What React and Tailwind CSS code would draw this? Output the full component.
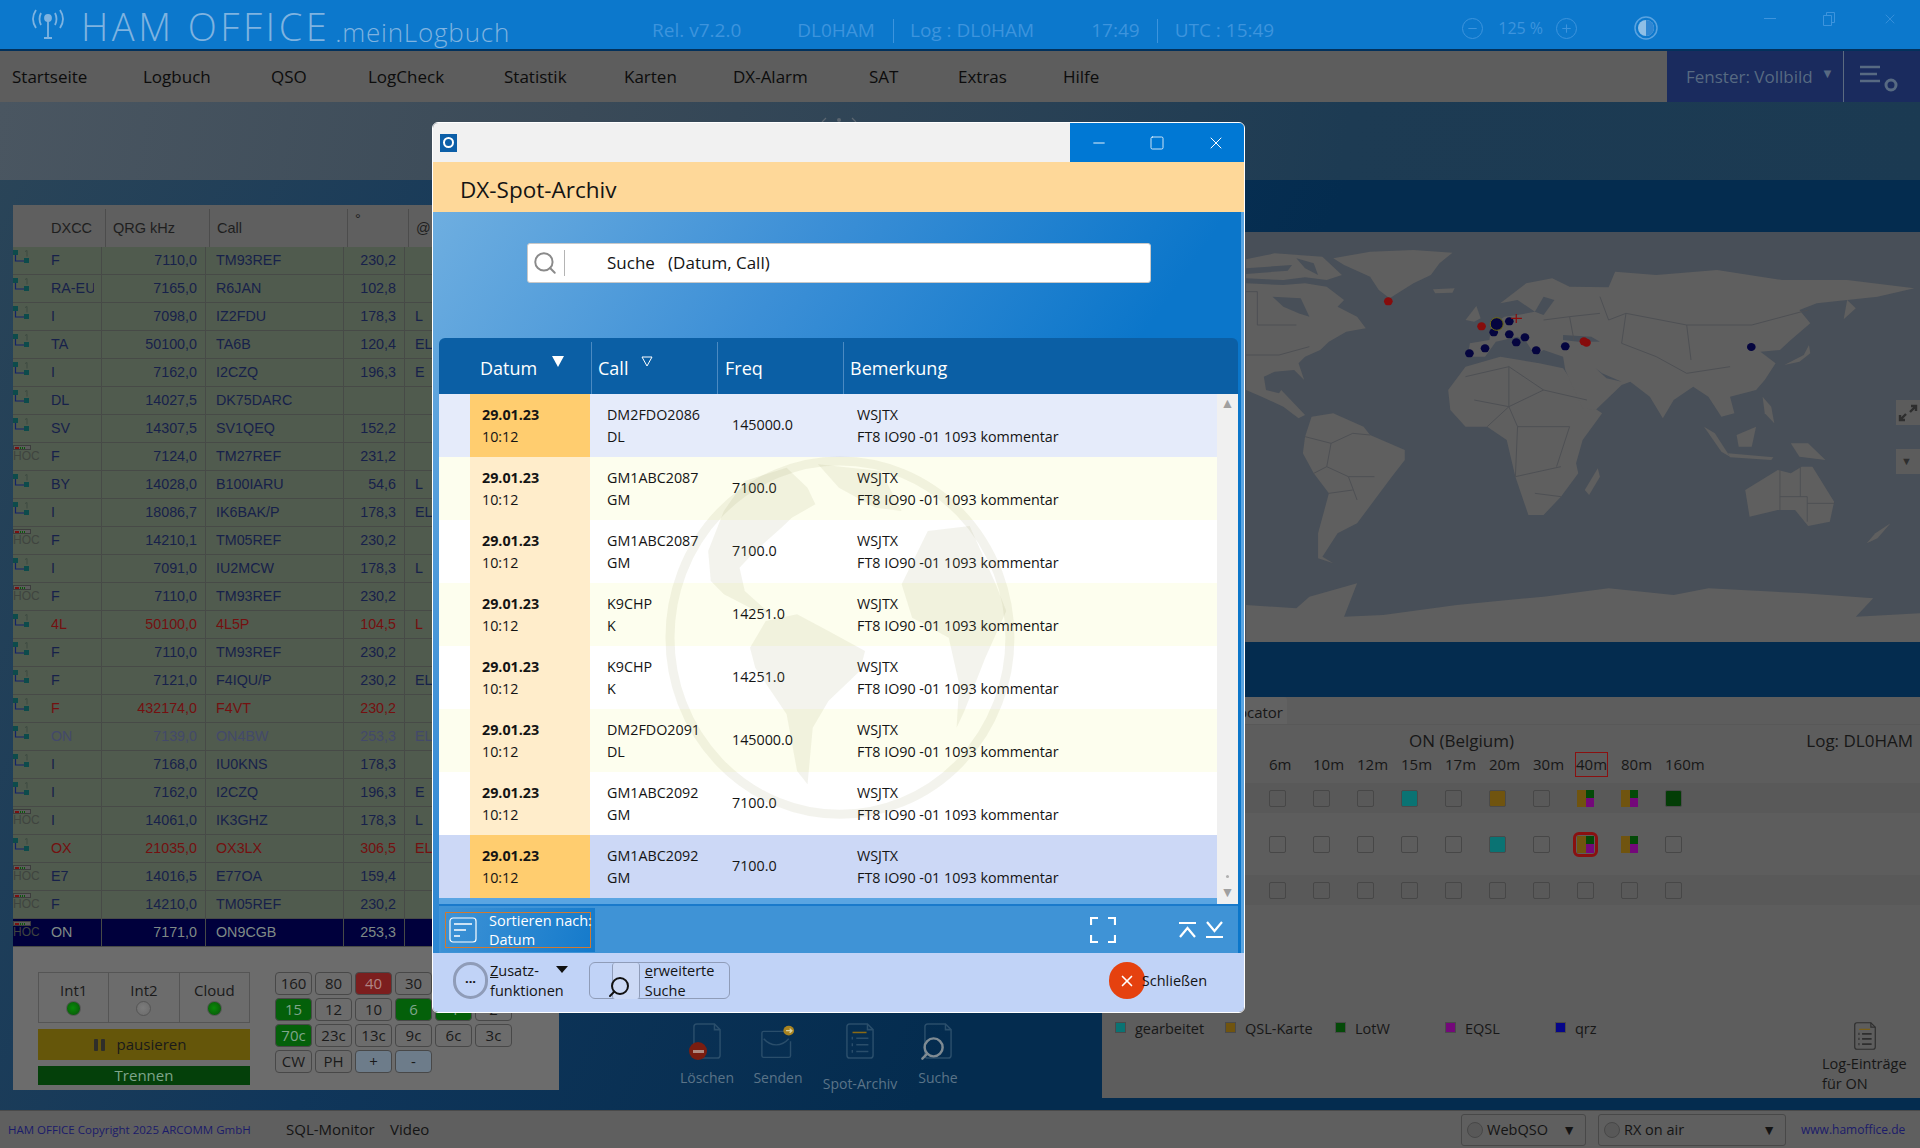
import React from 'react';
import { Search, Minus, Square, X, Plus } from 'lucide-react';

const menuItems = [
  { name: 'Startseite', w: 131 },
  { name: 'Logbuch', w: 128 },
  { name: 'QSO', w: 97 },
  { name: 'LogCheck', w: 136 },
  { name: 'Statistik', w: 120 },
  { name: 'Karten', w: 109 },
  { name: 'DX-Alarm', w: 136 },
  { name: 'SAT', w: 89 },
  { name: 'Extras', w: 105 },
  { name: 'Hilfe', w: 100 },
];

const spots = [
  ['t', 'F', '7110,0', 'TM93REF', '230,2', ''],
  ['t', 'RA-EU', '7165,0', 'R6JAN', '102,8', ''],
  ['t', 'I', '7098,0', 'IZ2FDU', '178,3', 'L'],
  ['t', 'TA', '50100,0', 'TA6B', '120,4', 'EL'],
  ['t', 'I', '7162,0', 'I2CZQ', '196,3', 'E'],
  ['t', 'DL', '14027,5', 'DK75DARC', '', ''],
  ['t', 'SV', '14307,5', 'SV1QEQ', '152,2', ''],
  ['h', 'F', '7124,0', 'TM27REF', '231,2', ''],
  ['t', 'BY', '14028,0', 'B100IARU', '54,6', 'L'],
  ['t', 'I', '18086,7', 'IK6BAK/P', '178,3', 'EL'],
  ['h', 'F', '14210,1', 'TM05REF', '230,2', ''],
  ['t', 'I', '7091,0', 'IU2MCW', '178,3', 'L'],
  ['h', 'F', '7110,0', 'TM93REF', '230,2', ''],
  ['t', '4L', '50100,0', '4L5P', '104,5', 'L', 'red'],
  ['t', 'F', '7110,0', 'TM93REF', '230,2', ''],
  ['t', 'F', '7121,0', 'F4IQU/P', '230,2', 'EL'],
  ['t', 'F', '432174,0', 'F4VT', '230,2', '', 'red'],
  ['t', 'ON', '7139,0', 'ON4BW', '253,3', 'EL', 'dim'],
  ['t', 'I', '7168,0', 'IU0KNS', '178,3', ''],
  ['t', 'I', '7162,0', 'I2CZQ', '196,3', 'E'],
  ['h', 'I', '14061,0', 'IK3GHZ', '178,3', 'L'],
  ['t', 'OX', '21035,0', 'OX3LX', '306,5', 'EL', 'red'],
  ['h', 'E7', '14016,5', 'E77OA', '159,4', ''],
  ['h', 'F', '14210,0', 'TM05REF', '230,2', ''],
  ['h', 'ON', '7171,0', 'ON9CGB', '253,3', '', 'sel'],
];

const rowText = {
  red: 'text-[#741010]',
  dim: 'text-[#43496a]',
  sel: 'text-[#7f8a86]',
};

const bandRows = [
  [['160'], ['80'], ['40', 'r'], ['30'], ['20'], ['17']],
  [['15', 'g'], ['12'], ['10'], ['6', 'g'], ['4', 'g'], ['2']],
  [['70c', 'g'], ['23c'], ['13c'], ['9c'], ['6c'], ['3c']],
  [['CW'], ['PH'], ['+', 'b'], ['-', 'b']],
];

const archive = [
  ['DM2FDO2086', 'DL', '145000.0', 'first'],
  ['GM1ABC2087', 'GM', '7100.0'],
  ['GM1ABC2087', 'GM', '7100.0'],
  ['K9CHP', 'K', '14251.0'],
  ['K9CHP', 'K', '14251.0'],
  ['DM2FDO2091', 'DL', '145000.0'],
  ['GM1ABC2092', 'GM', '7100.0'],
  ['GM1ABC2092', 'GM', '7100.0', 'sel'],
];

const bands = ['6m', '10m', '12m', '15m', '17m', '20m', '30m', '40m', '80m', '160m'];
const grid = [
  ['', '', '', 'c', '', 'q', '', 'm', 'm', 'l'],
  ['', '', '', '', '', 'c', '', 'x', 'm', ''],
  ['', '', '', '', '', '', '', '', '', ''],
];
const legend = [
  ['gearbeitet', 'bg-[#0a7373]'],
  ['QSL-Karte', 'bg-[#70540f]'],
  ['LotW', 'bg-[#044a08]'],
  ['EQSL', 'bg-[#74087a]'],
  ['qrz', 'bg-[#05058a]'],
];

const TreeIcon = () => (
  <svg width="20" height="16" viewBox="0 0 20 16" className="block">
    <rect x="0" y="0" width="5" height="5" fill="#0d4b4b" />
    <rect x="11" y="8" width="5" height="5" fill="#0d4b4b" />
    <path d="M2.500 5v6H11" stroke="#12236a" strokeWidth="1.2" fill="none" />
    <path d="M12 1.500l2-1v6" stroke="#3c4a40" strokeWidth="1" fill="none" />
  </svg>
);

const HocIcon = () => (
  <div className="flex flex-col">
    <div className="flex h-[5px] w-[18px] items-center gap-[1px] border border-[#3d3d3d] bg-[#5c5c5c] pl-[1px]">
      <span className="h-[2px] w-[4px] bg-[#7a1010]" />
      <span className="h-[2px] w-[1px] bg-[#0a5a0a]" />
      <span className="h-[2px] w-[1px] bg-[#0a5a0a]" />
      <span className="h-[2px] w-[1px] bg-[#0a5a0a]" />
    </div>
    <span className="font-['Liberation_Sans',sans-serif] text-[12px] leading-[13px] text-[#3f443f]">HOC</span>
  </div>
);

const Led = ({ on }) => (
  <span
    className={`mt-[1px] h-[15px] w-[15px] rounded-full border border-[#555] ${
      on
        ? 'bg-[radial-gradient(circle_at_45%_45%,#088a08,#086a08_55%,#0a4a14)]'
        : 'bg-[radial-gradient(circle_at_45%_45%,#7c7c7c,#6a6a6a)]'
    }`}
  />
);

const DocIcon = ({ className = 'h-[36px] w-[28px]', children, stroke = '#2a4e6b' }) => (
  <svg viewBox="0 0 30 38" preserveAspectRatio="none" className={className} fill="none" stroke={stroke} strokeWidth="1.6">
    <path d="M4 1h19l6 6v27a3 3 0 0 1-3 3H4a3 3 0 0 1-3-3V4a3 3 0 0 1 3-3z" />
    <path d="M23 1v6h6" />
    {children}
  </svg>
);

// grobe Weltkarte, Koordinaten im Massstab der Vorlage
const land = [
  'M215 175L300 155L400 150L490 158L460 190L440 225L400 250L345 295L320 270L300 230L240 195Z',
  'M14 250L100 255L150 250L200 260L240 300L225 320L270 350L290 385L245 395L205 425L185 450L150 470L135 490L148 540L125 510L80 515L55 530L60 570L90 580L95 570L110 590L150 645L135 655L100 620L50 590L14 570Z',
  'M14 178L80 160L190 170L235 225L200 240L150 232L100 240L14 235Z',
  'M165 650L215 640L285 680L300 705L380 750L380 780L350 830L310 900L270 970L225 1000L190 1070L215 1090L180 1075L180 1000L205 880L170 820L145 760L150 710Z',
  'M480 570L520 500L600 470L690 490L745 505L800 610L835 640L790 720L775 790L780 820L740 890L700 945L665 945L635 830L615 720L570 680L520 680L485 630Z',
  'M825 805L830 830L805 885L795 870Z',
  'M525 470L530 430L575 420L580 375L610 350L640 345L680 335L640 300L600 310L660 250L720 235L760 260L850 262L865 215L960 225L1100 210L1250 240L1400 240L1555 265L1470 290L1400 300L1420 325L1392 358L1400 300L1330 310L1290 330L1315 370L1270 420L1245 450L1200 455L1235 490L1210 540L1190 570L1130 590L1140 640L1110 650L1080 590L1045 560L1000 600L975 655L945 590L900 545L880 555L820 630L790 625L750 510L745 470L700 450L680 465L660 425L640 410L590 425L565 470Z',
  'M520 360L545 318L555 355L540 365Z',
  'M445 268L495 265L490 278L450 280Z',
  'M1255 495L1300 465L1312 435L1315 460L1290 485Z',
  'M1070 680L1095 700L1130 770L1110 755Z',
  'M1145 705L1190 680L1180 740L1150 740Z',
  'M1125 760L1230 772L1225 780L1130 772Z',
  'M1270 730L1310 730L1350 780L1290 770Z',
  'M1205 590L1225 620L1232 670L1210 640Z',
  'M1165 870L1240 810L1270 820L1295 800L1320 800L1370 905L1360 965L1310 978L1280 930L1240 930L1175 950Z',
  'M1500 970L1470 1015L1445 1030L1465 1000Z',
  'M14 1215L130 1225L160 1190L270 1150L240 1250L330 1245L500 1215L700 1190L850 1165L1000 1185L1080 1165L1300 1180L1460 1195L1420 1250L1568 1240L1568 1326L14 1326Z',
];
const sea = [
  'M75 290L140 295L160 350L135 340L100 320Z',
  'M745 405L810 410L830 425L780 425L745 420Z',
  'M680 335L700 290L725 300L700 345Z',
  'M14 205L120 195L110 212L14 222Z',
  'M130 175L170 190L180 225L150 205Z',
  'M820 505L845 535L880 545L835 520Z',
];
const borders = [
  'M14 465L90 465L160 440M14 275L40 275L40 375L130 375',
  'M150 710L210 730L260 700L300 705M210 730L200 800L250 830L310 830M250 830L270 900M200 800L170 820M205 880L260 870',
  'M520 530L620 500L700 570L800 600M540 600L620 620L700 570M620 500L620 620M570 680L620 620L640 680L760 680M640 680L635 830L740 800M680 880L740 890M760 680L730 800',
  'M830 290L850 360L890 340L1030 375L1180 375L1310 330M890 340L880 430L960 470L1030 520L1130 500M1030 375L1040 480M760 350L830 340M700 360L760 350L770 420',
  'M1245 810L1245 930M1245 890L1308 890L1308 965M1292 800L1292 890M1308 910L1370 910',
];

const WorldMap = () => (
  <svg viewBox="0 96 1568 1230" preserveAspectRatio="none" className="h-full w-[680px]">
    {land.map((d, i) => <path key={i} d={d} fill="#5f5f5f" />)}
    {sea.map((d, i) => <path key={i} d={d} fill="#484f58" />)}
    {borders.map((d, i) => (
      <path key={i} d={d} fill="none" stroke="#4e5054" strokeWidth="1" vectorEffect="non-scaling-stroke" />
    ))}
    {[[342, 304], [557, 379], [799, 428], [793, 424]].map(([cx, cy]) => (
      <ellipse key={cx} cx={cx} cy={cy} rx="10" ry="12" fill="#860c0c" />
    ))}
    {[[585, 397], [621, 364], [621, 403], [657, 412], [637, 427], [565, 445], [529, 460], [683, 451], [750, 439], [1179, 441]].map(([cx, cy], i) => (
      <ellipse key={i} cx={cx} cy={cy} rx="10" ry="12" fill="#05053f" />
    ))}
    <ellipse cx="592" cy="372" rx="15" ry="19" fill="#05053f" stroke="#6e6a10" strokeWidth="1" vectorEffect="non-scaling-stroke" />
    <path d="M637 342v27M625 355h25" stroke="#8a0c0c" strokeWidth="1.2" vectorEffect="non-scaling-stroke" />
  </svg>
);

const Globe = () => (
  <svg viewBox="0 0 1568 1350" preserveAspectRatio="none" className="pointer-events-none absolute left-[-2px] top-[328px] h-[450px] w-[820px]">
    <ellipse cx="782" cy="560" rx="325" ry="530" fill="none" stroke="#8c8c50" strokeOpacity="0.1" strokeWidth="9" vectorEffect="non-scaling-stroke" />
    <g fill="#8c8c50" fillOpacity="0.1">
      <path d="M560 180L600 90L680 50L720 110L735 160L690 200L670 230L620 300L590 350L600 420L650 490L610 470L560 430L535 390L530 300Z" />
      <path d="M640 510L700 490L760 540L830 600L820 660L760 750L730 830L720 1000L700 960L680 790L620 650L610 590Z" />
      <path d="M900 400L950 240L1030 225L1080 400L1100 480L1060 620L1020 780L1005 830L1010 700L990 560L920 500Z" />
      <path d="M740 40L860 60L900 180L850 170L780 110Z" />
    </g>
  </svg>
);

const Cell = ({ kind }) => {
  if (kind === 'c') return <span className="h-[17px] w-[17px] rounded-[2px] border border-[#4a4a4a] bg-[#0a7373]" />;
  if (kind === 'q') return <span className="h-[17px] w-[17px] rounded-[2px] border border-[#4a4a4a] bg-[#70540f]" />;
  if (kind === 'l') return <span className="h-[17px] w-[17px] rounded-[2px] border border-[#4a4a4a] bg-[#033d06]" />;
  if (kind === 'm' || kind === 'x') {
    return (
      <span className={`flex h-[17px] w-[17px] rounded-[2px] ${kind === 'x' ? 'outline-[3px] outline-offset-[1px] outline-[#8a1010]' : ''}`}>
        <span className="w-1/2 bg-[#70540f]" />
        <span className="flex w-1/2 flex-col">
          <span className="h-1/2 bg-[#044a08]" />
          <span className="h-1/2 bg-[#74087a]" />
        </span>
      </span>
    );
  }
  return <span className="h-[17px] w-[17px] rounded-[2px] border border-[#474747]" />;
};

export default function App() {
  return (
    <div className="relative flex h-[1148px] w-[1920px] flex-col overflow-hidden bg-[#5d5d5d] font-['Open_Sans',sans-serif]">
      {/* Titelleiste */}
      <header className="flex h-[51px] shrink-0 items-center border-b-2 border-[#02315c] bg-[#0c78cc]">
        <svg width="34" height="32" viewBox="0 0 34 32" className="ml-[31px] mt-[-4px] shrink-0" fill="none" stroke="#7fb3e0" strokeWidth="1.8">
          <path d="M5 3c-4 6-4 12 0 18M29 3c4 6 4 12 0 18M10 6c-2 4-2 8 0 12M24 6c2 4 2 8 0 12" />
          <circle cx="17" cy="11" r="3" fill="#7fb3e0" />
          <path d="M17 13v17M13 31h8" />
        </svg>
        <span className="ml-[16px] mt-[3px] whitespace-nowrap text-[38px] font-light leading-none tracking-[3.5px] text-[#7fb3e0]">HAM OFFICE</span>
        <span className="ml-[5px] mt-[14px] whitespace-nowrap text-[26px] font-light leading-none tracking-[0.8px] text-[#7fb3e0]">.meinLogbuch</span>
        <span className="ml-[142px] mt-[12px] whitespace-nowrap text-[19px] text-[#3d94dd]">Rel. v7.2.0</span>
        <span className="ml-[56px] mt-[12px] text-[19px] text-[#3d94dd]">DL0HAM</span>
        <span className="ml-[18px] mt-[12px] h-[24px] w-px bg-[#3d94dd]" />
        <span className="ml-[16px] mt-[12px] whitespace-nowrap text-[19px] text-[#3d94dd]">Log : DL0HAM</span>
        <span className="ml-[57px] mt-[12px] text-[19px] text-[#3d94dd]">17:49</span>
        <span className="ml-[17px] mt-[12px] h-[24px] w-px bg-[#3d94dd]" />
        <span className="ml-[17px] mt-[12px] whitespace-nowrap text-[19px] text-[#3d94dd]">UTC : 15:49</span>
        <span className="ml-[188px] mt-[7px] flex h-[21px] w-[21px] shrink-0 items-center justify-center rounded-full border border-[#3d94dd]">
          <Minus size={13} color="#3d94dd" />
        </span>
        <span className="ml-[15px] mt-[7px] whitespace-nowrap text-[16px] text-[#3d94dd]">125 %</span>
        <span className="ml-[13px] mt-[7px] flex h-[21px] w-[21px] shrink-0 items-center justify-center rounded-full border border-[#3d94dd]">
          <Plus size={13} color="#3d94dd" />
        </span>
        <svg width="24" height="24" viewBox="0 0 24 24" className="ml-[57px] mt-[7px] shrink-0">
          <circle cx="12" cy="12" r="11" fill="none" stroke="#5aa3e0" strokeWidth="1.5" />
          <circle cx="12" cy="12" r="8" fill="#8fbfe6" />
          <path d="M12 4a8 8 0 0 1 0 16z" fill="#2f86d2" />
        </svg>
        <span className="ml-[106px] mt-[-12px] h-px w-[12px] shrink-0 bg-[#3d94dd]" />
        <svg width="14" height="14" viewBox="0 0 14 14" className="ml-[47px] mt-[-12px] shrink-0" fill="none" stroke="#3d94dd">
          <path d="M3.500 3.500V.5h8v10h-3M.5 3.500h8v10h-8z" />
        </svg>
        <X size={16} color="#3d94dd" className="ml-[45px] mt-[-12px] shrink-0" strokeWidth={1.2} />
      </header>

      {/* Hauptmenue */}
      <nav className="flex h-[51px] shrink-0 items-center bg-[#5d5d5d] pl-[12px] text-[17px] text-[#0c0c0c]">
        {menuItems.map((item) => (
          <span key={item.name} style={{ width: item.w }}>{item.name}</span>
        ))}
        <div className="ml-auto flex h-full w-[253px] items-center bg-[#1a2b5e] text-[#576a82]">
          <span className="ml-[19px] w-[126px] whitespace-nowrap">Fenster: Vollbild</span>
          <span className="ml-[9px] mt-[-6px] text-[13px]">▼</span>
          <span className="ml-[9px] h-full w-px bg-[#5c6b80]" />
          <svg width="42" height="34" viewBox="0 0 42 34" className="ml-[12px] mt-[6px]" fill="none" stroke="#576a82" strokeWidth="2.4">
            <path d="M4 4h20M4 11h17M4 18h20" />
            <circle cx="35" cy="22" r="5" strokeWidth="3" />
          </svg>
        </div>
      </nav>

      {/* Arbeitsflaeche */}
      <main className="flex min-h-0 flex-1 flex-col bg-[linear-gradient(115deg,#2b4558_0%,#10365a_32%,#042c4f_58%)]">
        <div className="flex h-[78px] shrink-0 bg-[linear-gradient(100deg,#4a5661_0%,#3a4a58_30%,#1d3b53_70%,#1b3a52_100%)] pl-[818px] pt-[15px]">
          <svg width="42" height="6" viewBox="0 0 42 6" fill="none" stroke="#5c6670" strokeWidth="1.200">
            <path d="M4 5L8 1M38 5L34 1" />
            <circle cx="21" cy="3" r="2" fill="#5c6670" stroke="none" />
          </svg>
        </div>
        <div className="flex min-h-0 flex-1">
          {/* Spot-Liste */}
          <section className="flex w-[559px] shrink-0 flex-col pl-[13px] pt-[25px]">
            <div className="flex h-[885px] flex-col rounded-t-[4px] bg-[#6c6c6c]">
              <div className="flex h-[42px] shrink-0 bg-[#5f5f5f] pt-[4px] font-['Liberation_Sans',sans-serif] text-[14.5px] text-[#1e1e1e]">
                <span className="w-[92px] pl-[38px] pt-[9px]">DXCC</span>
                <span className="w-[104px] border-l border-[#4c4c4c] pl-[7px] pt-[9px]">QRG kHz</span>
                <span className="w-[138px] border-l border-[#4c4c4c] pl-[7px] pt-[9px]">Call</span>
                <span className="w-[61px] border-l border-[#4c4c4c] pl-[7px]">°</span>
                <span className="flex-1 border-l border-[#4c4c4c] pl-[7px] pt-[9px]">@</span>
              </div>
              <div className="flex flex-col font-['Liberation_Sans',sans-serif] text-[14.3px]">
                {spots.map(([icon, dxcc, qrg, call, deg, at, state], i) => (
                  <div
                    key={i}
                    className={`flex h-[28px] border-b border-[#474a47] ${state === 'sel' ? 'bg-[#00003c]' : 'bg-[#505b4e]'} ${rowText[state] || 'text-[#17214a]'}`}
                  >
                    <div className="flex h-full w-[89px] shrink-0 border-r border-[#474a47]">
                      <div className={`w-[38px] shrink-0 ${icon === 't' ? 'pt-[3px]' : 'pt-[2px]'}`}>{icon === 't' ? <TreeIcon /> : <HocIcon />}</div>
                      <span className="w-[43px] overflow-hidden whitespace-nowrap leading-[27px]">{dxcc}</span>
                    </div>
                    <span className="w-[104px] shrink-0 border-r border-[#474a47] pr-[8px] text-right leading-[27px]">{qrg}</span>
                    <span className="w-[138px] shrink-0 border-r border-[#474a47] pl-[10px] leading-[27px]">{call}</span>
                    <span className="w-[61px] shrink-0 border-r border-[#474a47] pr-[8px] text-right leading-[27px]">{deg}</span>
                    <span className="flex-1 pl-[10px] leading-[27px]">{at}</span>
                  </div>
                ))}
              </div>
              <div className="flex flex-1 gap-[25px] pl-[25px] pt-[25px] text-[#1a1a1a]">
                <div className="flex w-[212px] shrink-0 flex-col">
                  <div className="flex h-[51px] border border-[#555]">
                    {[['Int1', true], ['Int2', false], ['Cloud', true]].map(([label, on], i) => (
                      <div key={label} className={`flex flex-1 flex-col items-center pt-[7px] ${i > 0 ? 'border-l border-[#555]' : ''}`}>
                        <span className="text-[15px] leading-[20px]">{label}</span>
                        <Led on={on} />
                      </div>
                    ))}
                  </div>
                  <div className="mt-[6px] flex h-[31px] items-center justify-center gap-[12px] bg-[#65560a] pr-[8px] text-[15px]">
                    <span className="flex gap-[3px]">
                      <span className="h-[12px] w-[4px] rounded-[1px] bg-[#2e2e2a]" />
                      <span className="h-[12px] w-[4px] rounded-[1px] bg-[#2e2e2a]" />
                    </span>
                    pausieren
                  </div>
                  <div className="mt-[6px] flex h-[19px] items-center justify-center bg-[#04400a] text-[15px] text-[#7fa58a]">Trennen</div>
                </div>
                <div className="grid grid-cols-[repeat(6,37px)] gap-x-[3px] gap-y-[3px] self-start">
                  {bandRows.flat().map(([label, tone], i) => (
                    <span
                      key={i}
                      className={`flex h-[23px] items-center justify-center rounded-[4px] border border-[#484848] text-[15px] ${
                        tone === 'g' ? 'bg-[#04600a] text-[#7fa58a]' : tone === 'r' ? 'bg-[#7c1e1e] text-[#b08484]' : tone === 'b' ? 'bg-[#6d7c8a]' : ''
                      }`}
                    >
                      {label}
                    </span>
                  ))}
                </div>
              </div>
            </div>
          </section>

          {/* Aktionen */}
          <section className="flex w-[543px] shrink-0 items-end pb-[22px] pl-[115px] text-[14px] text-[#5b7488]">
            <div className="flex w-[66px] flex-col items-center">
              <div className="relative">
                <DocIcon />
                <span className="absolute left-[-4px] top-[19px] flex h-[18px] w-[18px] items-center justify-center rounded-full bg-[#7a1d10]">
                  <span className="h-[3px] w-[11px] bg-[#b08a80]" />
                </span>
              </div>
              <span className="mt-[8px]">Löschen</span>
            </div>
            <div className="ml-[5px] flex w-[66px] flex-col items-center">
              <svg width="34" height="34" viewBox="0 0 38 42" preserveAspectRatio="none" fill="none" stroke="#2a4e6b" strokeWidth="1.6">
                <path d="M26 8H3a2 2 0 0 0-2 2v28a2 2 0 0 0 2 2h28a2 2 0 0 0 2-2V20" />
                <path d="M3 17c8 10 20 10 28 0" />
                <circle cx="31" cy="7" r="6" fill="#a88320" stroke="none" />
                <path d="M28 7h6M32 4.500l2.500 2.500-2.500 2.500" stroke="#d8d0a0" />
              </svg>
              <span className="mt-[8px]">Senden</span>
            </div>
            <div className="ml-[9px] flex w-[80px] flex-col items-center">
              <DocIcon>
                <path d="M7 10h15" stroke="#8a6a15" />
                <path d="M11 16h13M11 23h13M11 30h13" />
                <path d="M6 16h1.500M6 23h1.500M6 30h1.500" strokeWidth="3" />
              </DocIcon>
              <span className="mb-[-6px] mt-[14px]">Spot-Archiv</span>
            </div>
            <div className="ml-[8px] flex w-[60px] flex-col items-center">
              <div className="relative">
                <DocIcon />
                <Search size={27} color="#7f8b93" strokeWidth={2.2} className="absolute left-[-5px] top-[12px] -scale-x-100" />
              </div>
              <span className="mt-[8px]">Suche</span>
            </div>
          </section>

          {/* Karte und Locator */}
          <section className="flex w-[818px] shrink-0 flex-col pt-[52px]">
            <div className="relative flex h-[410px] shrink-0 justify-end bg-[#484f58]">
              <WorldMap />
              <span className="absolute right-0 top-[168px] flex h-[25px] w-[24px] items-center justify-center bg-[#5c5c5c]">
                <svg width="20" height="18" viewBox="0 0 20 18" fill="none" stroke="#2e2e2e" strokeWidth="2.4">
                  <path d="M12 8l6-6M13 2h5v5M8 10l-6 6M2 11v5h5" />
                </svg>
              </span>
              <span className="absolute right-0 top-[217px] flex h-[25px] w-[24px] items-center justify-center bg-[#5c5c5c] pr-[3px] text-[11px] text-[#2e2e2e]">▼</span>
            </div>
            <div className="mt-[55px] flex h-[401px] shrink-0 flex-col bg-[#5d5d5d] text-[#171717]">
              <div className="flex h-[28px] shrink-0 justify-start border-b border-[#585858] pl-[120px]">
                <span className="flex h-full w-[65px] items-center justify-end rounded-t-[3px] bg-[#626262] pr-[4px] pt-[4px] text-[15px]">Locator</span>
              </div>
              <div className="flex h-[27px] shrink-0 items-center justify-between pl-[307px] pr-[7px] pt-[4px] text-[17px]">
                <span>ON (Belgium)</span>
                <span>Log: DL0HAM</span>
              </div>
              <div className="flex h-[25px] shrink-0 items-center pl-[167px] text-[15px]">
                {bands.map((b) => (
                  <div key={b} className="w-[44px] whitespace-nowrap">
                    {b === '40m'
                      ? <span className="ml-[-2px] flex h-[25px] w-[33px] items-center justify-center border border-[#8a1010]">{b}</span>
                      : b}
                  </div>
                ))}
              </div>
              <div className="mt-[6px] flex flex-col gap-[16px]">
                {grid.map((row, r) => (
                  <div key={r} className={`flex h-[30px] items-center pl-[167px] ${r === 1 ? '' : 'bg-[#595959]'}`}>
                    {row.map((kind, c) => (
                      <div key={c} className="flex w-[44px]"><Cell kind={kind} /></div>
                    ))}
                  </div>
                ))}
              </div>
              <div className="mt-auto flex items-start pb-[4px] pl-[13px] pr-[8px] text-[14.5px]">
                {legend.map(([label, swatch]) => (
                  <div key={label} className="mt-[-4px] flex w-[110px] gap-[9px]">
                    <span className={`mt-[4px] h-[11px] w-[11px] border border-[#4a4a4a] ${swatch}`} />
                    {label}
                  </div>
                ))}
                <div className="ml-auto flex w-[90px] flex-col">
                  <DocIcon stroke="#2e2e2e" className="ml-[32px] h-[28px] w-[22px]">
                    <path d="M7 10h15" stroke="#7a5f15" />
                    <path d="M11 16h13M11 23h13M11 30h13" strokeWidth="2.400" />
                    <path d="M6 16h1.500M6 23h1.500M6 30h1.500" strokeWidth="3" />
                  </DocIcon>
                  <span className="mt-[4px] whitespace-nowrap leading-[20px]">Log-Einträge</span>
                  <span className="leading-[20px]">für ON</span>
                </div>
              </div>
            </div>
          </section>
        </div>
      </main>

      {/* Statusleiste */}
      <footer className="flex h-[38px] shrink-0 items-center border-t border-[#4a4a4a] bg-[#5f5f5f] pl-[8px] text-[#141414]">
        <span className="w-[278px] shrink-0 whitespace-nowrap text-[11.5px] text-[#1b1b6a]">HAM OFFICE Copyright 2025 ARCOMM GmbH</span>
        <span className="w-[104px] shrink-0 text-[15px]">SQL-Monitor</span>
        <span className="w-[40px] shrink-0 text-[15px]">Video</span>
        <div className="ml-[1031px] flex h-[32px] w-[125px] shrink-0 items-center rounded-[3px] border border-[#484848] pl-[5px] text-[14.5px]">
          <span className="h-[16px] w-[16px] rounded-full border border-[#484848] bg-[#585858]" />
          <span className="ml-[4px]">WebQSO</span>
          <span className="ml-auto pr-[9px] text-[14px]">▼</span>
        </div>
        <div className="ml-[12px] flex h-[32px] w-[188px] shrink-0 items-center rounded-[3px] border border-[#484848] pl-[5px] text-[14.5px]">
          <span className="h-[16px] w-[16px] rounded-full border border-[#484848] bg-[#585858]" />
          <span className="ml-[4px]">RX on air</span>
          <span className="ml-auto pr-[9px] text-[14px]">▼</span>
        </div>
        <span className="ml-[15px] whitespace-nowrap text-[12px] text-[#1b1b6a]">www.hamoffice.de</span>
      </footer>

      {/* Dialog DX-Spot-Archiv */}
      <div className="absolute left-[432px] top-[122px] flex h-[891px] w-[813px] flex-col overflow-hidden rounded-[6px] border border-white text-[#141414]">
        <div className="flex h-[39px] shrink-0 items-center justify-between bg-[#f1f1f1]">
          <span className="ml-[7px] flex h-[18px] w-[17px] items-center justify-center bg-[#0c5fa8]">
            <span className="h-[11px] w-[11px] rounded-full border-2 border-white" />
          </span>
          <div className="flex h-full w-[174px] items-center justify-between bg-[#0078d4] pl-[20px] pr-[18px] text-white">
            <Minus size={18} strokeWidth={1.2} />
            <Square size={16} strokeWidth={1.2} />
            <X size={20} strokeWidth={1.2} />
          </div>
        </div>
        <div className="flex h-[50px] shrink-0 items-center bg-[#fed899] pl-[27px] pt-[5px] text-[22.5px]">DX-Spot-Archiv</div>
        <div className="relative flex min-h-0 flex-1 flex-col border-r-[3px] border-[#5aa5e2] bg-[linear-gradient(125deg,#6eaee0_0%,#3c8fd6_30%,#0b76ca_60%,#0b76ca_100%)] pl-[6px] pr-[3px]">
          <div className="ml-[88px] mt-[31px] flex h-[40px] w-[624px] shrink-0 items-center self-start rounded-[3px] border border-[#c8c8c8] bg-white">
            <Search size={26} color="#8a8a8a" strokeWidth={1.8} className="ml-[4px] shrink-0" />
            <span className="ml-[6px] h-[26px] w-px bg-[#b4b4b4]" />
            <span className="ml-[42px] whitespace-pre text-[17px]">Suche   (Datum, Call)</span>
          </div>
          <div className="mt-[55px] flex h-[56px] shrink-0 rounded-t-[6px] bg-[#0b5fa5] pt-[4px] text-[18px] text-white">
            <div className="relative flex w-[153px] items-center justify-start border-r border-[#4b8ac2] pl-[41px]">
              Datum
              <span className="ml-[15px] mt-[-14px] h-0 w-0 border-x-[6px] border-t-[11px] border-x-transparent border-t-white" />
            </div>
            <div className="flex w-[126px] items-center border-r border-[#4b8ac2] pl-[6px]">
              Call
              <svg width="12" height="11" viewBox="0 0 12 11" className="ml-[13px] mt-[-14px]" fill="none" stroke="white"><path d="M1 1h10L6 10z" /></svg>
            </div>
            <div className="flex w-[126px] items-center border-r border-[#4b8ac2] pl-[7px]">Freq</div>
            <div className="flex items-center pl-[6px]">Bemerkung</div>
          </div>
          <div className="flex shrink-0">
            <div className="flex w-[778px] flex-col text-[14.3px]">
              {archive.map(([call, prefix, freq, mark], i) => (
                <div
                  key={i}
                  className={`flex h-[63px] ${mark === 'first' ? 'bg-[#e5ebfa]' : mark === 'sel' ? 'bg-[#ccd8f6]' : i % 2 ? 'bg-[#fdfeee]' : 'bg-white'}`}
                >
                  <div className={`ml-[31px] flex w-[120px] flex-col justify-center pl-[12px] leading-[22px] ${mark ? 'bg-[#ffcd6f]' : 'bg-[#ffedcb]'}`}>
                    <span className="font-bold">29.01.23</span>
                    <span>10:12</span>
                  </div>
                  <div className="ml-[17px] flex w-[125px] flex-col justify-center whitespace-nowrap leading-[22px]">
                    <span>{call}</span>
                    <span>{prefix}</span>
                  </div>
                  <div className="flex w-[125px] items-center pb-[2px]">{freq}</div>
                  <div className="flex flex-col justify-center leading-[22px]">
                    <span>WSJTX</span>
                    <span>FT8 IO90 -01 1093 kommentar</span>
                  </div>
                </div>
              ))}
              <div className="h-[6px] bg-[#5aa5e2]" />
            </div>
            <div className="flex w-[21px] flex-col items-center bg-[#f0f0f0] pb-[4px] pt-[1px] text-[14px] leading-[16px] text-[#a0a0a0]">
              <span>▲</span>
              <span className="mb-[6px] mt-auto h-[3px] w-[3px] rounded-full bg-[#b0b0b0]" />
              <span>▼</span>
            </div>
          </div>
          <div className="h-[2px] shrink-0 bg-[#1a7acb]" />
          <div className="flex min-h-0 flex-1 items-center bg-[#3f93d6] pr-[14px]">
            <div className="ml-[2px] flex h-[44px] w-[154px] items-center bg-[linear-gradient(110deg,#3f93d6,#147acb)] p-[4px]">
              <div className="flex h-full w-full items-center border border-[#d07a30] pl-[3px] text-[14.5px] leading-[19px] text-white">
                <svg width="28" height="26" viewBox="0 0 28 26" fill="none" stroke="white" strokeWidth="1.2" className="shrink-0">
                  <rect x="1" y="1" width="26" height="24" rx="3" />
                  <path d="M5 7h18M5 13h12M5 19h6" strokeWidth="1.600" />
                </svg>
                <span className="ml-[12px] whitespace-nowrap">Sortieren nach:<br />Datum</span>
              </div>
            </div>
            <svg width="26" height="26" viewBox="0 0 26 26" className="ml-auto" fill="none" stroke="white" strokeWidth="2.2">
              <path d="M1 8V1h7M18 1h7v7M25 18v7h-7M8 25H1v-7" />
            </svg>
            <svg width="46" height="18" viewBox="0 0 46 18" className="ml-[62px]" fill="none" stroke="white" strokeWidth="2.2">
              <path d="M1 2h17M2 16l7.500-9 7.500 9M29 1l7.500 9L44 1M28 16h17" />
            </svg>
          </div>
        </div>
        <div className="flex h-[59px] shrink-0 items-center bg-[#c1d3f7] pb-[4px] text-[14.5px]">
          <span className="ml-[20px] flex h-[37px] w-[35px] items-center justify-center rounded-full border-[3px] border-[#8f9cb8] pb-[4px] text-[13px] font-bold">...</span>
          <span className="ml-[2px] leading-[20px]"><u>Z</u>usatz-<br />funktionen</span>
          <span className="ml-[-8px] mt-[-22px] h-0 w-0 border-x-[6px] border-t-[7px] border-x-transparent border-t-[#111]" />
          <div className="ml-[21px] flex h-[37px] w-[141px] items-center rounded-[6px] border border-[#8f9cb8] leading-[20px]">
            <div className="relative ml-[22px] h-[36px] w-[28px] shrink-0 rounded-[3px] border-x border-[#8f9cb8] bg-[#ccd9f5]">
              <Search size={24} color="#111" strokeWidth={2} className="absolute left-[-6px] top-[12px] -scale-x-100" />
            </div>
            <span className="ml-[5px]"><u>e</u>rweiterte<br />Suche</span>
          </div>
          <span className="ml-[379px] flex h-[37px] w-[36px] shrink-0 items-center justify-center rounded-full bg-[#e5410f]">
            <X size={18} color="white" strokeWidth={2.2} />
          </span>
          <span className="ml-[-3px]">Schließen</span>
        </div>
        <Globe />
      </div>
    </div>
  );
}
